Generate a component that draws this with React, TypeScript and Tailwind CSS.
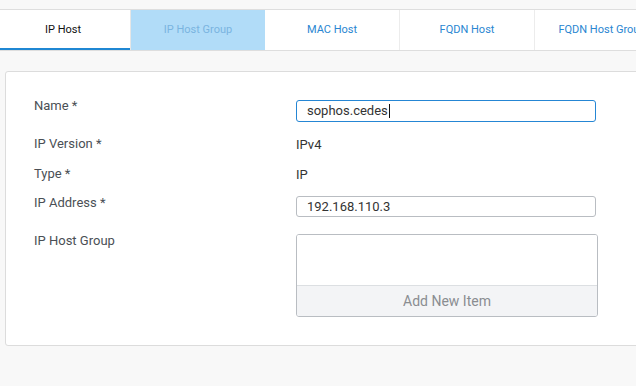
const tabs = [
  { label: 'IP Host', state: 'active' },
  { label: 'IP Host Group', state: 'hover' },
  { label: 'MAC Host', state: 'idle' },
  { label: 'FQDN Host', state: 'idle' },
  { label: 'FQDN Host Group', state: 'idle' },
]

function Tab({ label, state }: { label: string; state: string }) {
  if (state === 'active') {
    return (
      <div className="relative flex h-full w-[131px] shrink-0 items-center justify-center border-r border-[#e6e6e6] bg-white pr-[4px] text-[#111]">
        {label}
        <div className="absolute bottom-0 left-0 h-[2px] w-[130px] bg-[#1f87d3]" />
      </div>
    )
  }
  if (state === 'hover') {
    return (
      <div className="flex h-full w-[134px] shrink-0 items-center justify-center bg-[#b1dcf8] text-[#7ab4e0]">
        {label}
      </div>
    )
  }
  return (
    <div className="flex h-full w-[135px] shrink-0 items-center justify-center whitespace-nowrap border-r border-[#ececec] bg-white text-[#2a86d1]">
      {label}
    </div>
  )
}

export default function App() {
  return (
    <div className="h-[386px] w-[636px] overflow-hidden bg-[#f8f8f8] pt-[9px] font-['Roboto',sans-serif] text-[13px] text-[#4a4f55]">
      {/* Tabs */}
      <div className="flex h-[42px] border-y border-[#dedede] text-[11px]">
        {tabs.map((t) => (
          <Tab key={t.label} label={t.label} state={t.state} />
        ))}
      </div>

      {/* Form card */}
      <div className="ml-[5px] mt-[20px] h-[275px] w-[700px] rounded-[3px] border border-[#dcdcdc] bg-white pl-[28px] pt-[26px]">
        <div className="flex">
          <div className="w-[262px] leading-4">Name *</div>
          <div className="mt-[2px] flex h-[22px] w-[300px] items-center rounded-[3px] border border-[#2586d4] px-[10px] text-[#333]">
            sophos.cedes<span className="ml-px h-[14px] w-px bg-[#111]" />
          </div>
        </div>
        <div className="mt-[14px] flex leading-4">
          <div className="w-[262px]">IP Version *</div>
          <div className="mt-px text-[#333]">IPv4</div>
        </div>
        <div className="mt-[13px] flex leading-4">
          <div className="w-[262px]">Type *</div>
          <div className="mt-px text-[#333]">IP</div>
        </div>
        <div className="mt-[12px] flex">
          <div className="w-[262px] leading-4">IP Address *</div>
          <div className="mt-px flex h-[21px] w-[300px] items-center rounded-[3px] border border-[#b9bdc2] px-[10px] text-[#333]">
            192.168.110.3
          </div>
        </div>
        <div className="mt-[16px] flex">
          <div className="w-[262px] leading-4">IP Host Group</div>
          <div className="mt-px flex h-[83px] w-[302px] flex-col overflow-hidden rounded-[3px] border border-[#b9bdc2]">
            <div className="flex-1 bg-white" />
            <div className="flex h-[31px] items-center justify-center border-t border-[#dcdfe2] bg-[#f3f4f6] text-[14px] text-[#8a8d91]">
              Add New Item
            </div>
          </div>
        </div>
      </div>
    </div>
  )
}
